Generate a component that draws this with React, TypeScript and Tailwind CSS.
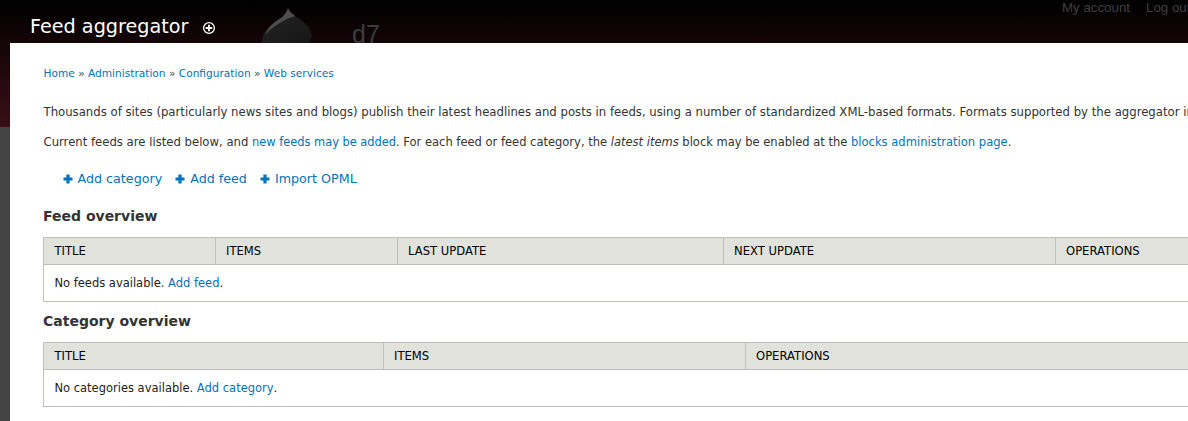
const F = "font-['DejaVu_Sans',sans-serif]";
const link = "text-[#0074bd]";

function Plus() {
  return (
    <svg width="10" height="10" viewBox="0 0 10 10" className="shrink-0">
      <path d="M3.400 0.500h3.200v2.900h2.900v3.200H6.600v2.900H3.400V6.600H0.500V3.400h2.900z" fill="#0074bd" />
    </svg>
  );
}

function Table({ cols, message, action }: { cols: [string, number][]; message: string; action: string }) {
  return (
    <div className="border border-[#bebfb9] w-[1200px]">
      <div className="flex h-[27px] bg-[#e1e2dc] border-b border-[#bebfb9] items-center">
        {cols.map(([c, w], i) => (
          <div
            key={c}
            style={{ width: w }}
            className={`h-full flex items-center pt-[1px] shrink-0 text-black text-[11.600px] ${i > 0 ? "pl-[10px] border-l border-[#bebfb9]" : "pl-[10.500px]"}`}
          >
            {c}
          </div>
        ))}
      </div>
      <div className="h-[36px] flex items-center pl-[10.400px] pt-[2px] text-[11.500px] text-[#222]">
        {message}&nbsp;<span className={link}>{action}</span>.
      </div>
    </div>
  );
}

export default function App() {
  return (
    <div className={`${F} relative w-[1188px] h-[421px] overflow-hidden flex flex-col bg-[linear-gradient(to_bottom,#000_0,#3a0f17_127px,#444_127px,#444_100%)]`}>
      <header className="h-[43px] shrink-0 relative flex items-start">
        <h1 className="ml-[30px] mt-[14px] text-[19.200px] leading-[26px] text-white font-normal">Feed aggregator</h1>
        <svg width="14" height="14" viewBox="0 0 14 14" className="ml-[14px] mt-[21px]">
          <circle cx="7" cy="7" r="5.400" fill="none" stroke="#fff" strokeWidth="1.300" />
          <path d="M6 3.700h2V6h2.300v2H8v2.300H6V8H3.700V6H6z" fill="#fff" />
        </svg>
        <svg width="64" height="43" viewBox="0 0 64 43" className="absolute left-[257px] top-0">
          <defs>
            <linearGradient id="drop" x1="0" y1="0" x2="1" y2="1">
              <stop offset="0" stopColor="#262626" />
              <stop offset="1" stopColor="#161616" />
            </linearGradient>
          </defs>
          <path d="M31 8C33 15 46 19 52 28C56 33 55 39 52 43H5C5 34 11 27 18 22C24 18 29 15 31 8z" fill="url(#drop)" />
          <path d="M31 8C33 13 37 15 38 16C31 18 18 24 8 35C10 29 14 25 18 22C24 18 29 15 31 8z" fill="#4d4d4d" />
        </svg>
        <span className="absolute left-[352px] top-[19px] text-[25px] leading-[30px] text-[#3c3c3c] font-['Liberation_Sans',sans-serif]">d7</span>
        <nav className="absolute left-[1062px] top-0 flex gap-[16px] text-[13.300px] leading-[16px] text-[#3f3f3f] whitespace-nowrap font-['Liberation_Sans',sans-serif]">
          <span>My account</span>
          <span>Log out</span>
        </nav>
      </header>
      <main className="ml-[10px] flex-1 bg-white pl-[33px] text-[#3b3b3b]">
        <div className="pl-[0.500px] pt-[24px] text-[10.600px] leading-[13px] text-[#444] whitespace-nowrap">
          <span className={link}>Home</span> » <span className={link}>Administration</span> » <span className={link}>Configuration</span> » <span className={link}>Web services</span>
        </div>
        <p className="pl-[0.500px] mt-[24px] text-[11.700px] leading-[16px] text-[#333] whitespace-nowrap">
          Thousands of sites (particularly news sites and blogs) publish their latest headlines and posts in feeds, using a number of standardized XML-based formats. Formats supported by the aggregator include
        </p>
        <p className="pl-[0.500px] mt-[14px] text-[11.500px] leading-[16px] text-[#333] whitespace-nowrap">
          <span className="text-[11.660px]">Current feeds are listed below, and </span><span className={`${link} text-[11.400px]`}>new feeds may be added</span>. For each feed or feed category, the <em>latest items</em> block may be enabled at the <span className={`${link} text-[11.550px]`}>blocks administration page</span>.
        </p>
        <div className={`mt-[20px] ml-[19.500px] flex gap-[13px] text-[12.700px] leading-[18px] ${link}`}>
          <span className="flex items-center gap-[5px]"><Plus />Add category</span>
          <span className="flex items-center gap-[5px]"><Plus />Add feed</span>
          <span className="flex items-center gap-[5px]"><Plus />Import OPML</span>
        </div>
        <h2 className="mt-[18px] mb-[11px] text-[14px] leading-[20px] font-bold text-[#333]">Feed overview</h2>
        <Table cols={[["TITLE", 171], ["ITEMS", 182], ["LAST UPDATE", 326], ["NEXT UPDATE", 332], ["OPERATIONS", 189]]} message="No feeds available." action="Add feed" />
        <h2 className="mt-[9px] mb-[11px] text-[14px] leading-[20px] font-bold text-[#333]">Category overview</h2>
        <Table cols={[["TITLE", 339], ["ITEMS", 362], ["OPERATIONS", 499]]} message="No categories available." action="Add category" />
      </main>
    </div>
  );
}
